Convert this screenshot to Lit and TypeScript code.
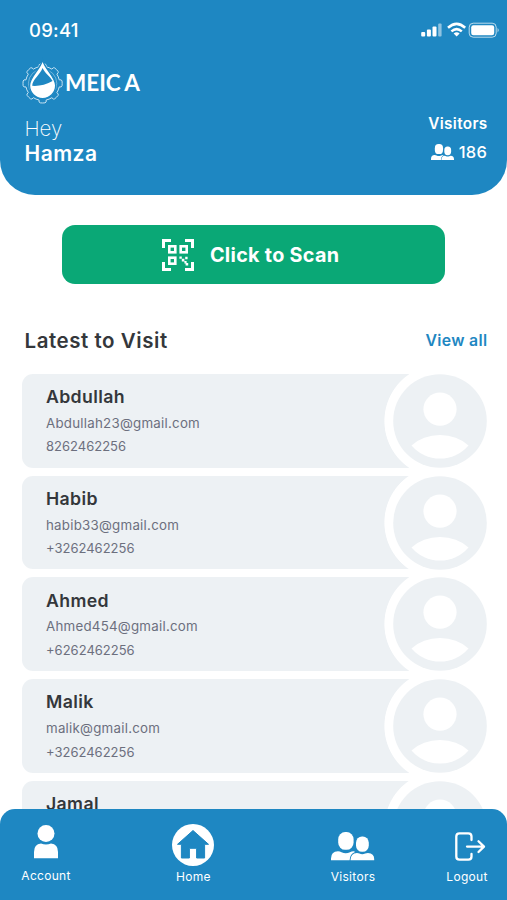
import { LitElement, html, css, svg } from "lit";
import { customElement, property } from "lit/decorators.js";

interface Visitor {
  name: string;
  email: string;
  phone: string;
}

const VISITORS: Visitor[] = [
  { name: "Abdullah", email: "Abdullah23@gmail.com", phone: "8262462256" },
  { name: "Habib", email: "habib33@gmail.com", phone: "+3262462256" },
  { name: "Ahmed", email: "Ahmed454@gmail.com", phone: "+6262462256" },
  { name: "Malik", email: "malik@gmail.com", phone: "+3262462256" },
  { name: "Jamal", email: "", phone: "" },
];

// Outline of the cog behind the drop: eight teeth around the origin.
const cogPath = (): string => {
  const pts: string[] = [];
  const at = (r: number, deg: number) => {
    const a = (deg * Math.PI) / 180;
    return `${(r * Math.cos(a)).toFixed(2)} ${(r * Math.sin(a)).toFixed(2)}`;
  };
  for (let i = 0; i < 8; i++) {
    const c = i * 45;
    pts.push(`${i ? "L" : "M"}${at(17, c - 12)}`);
    pts.push(`Q${at(19.6, c - 12)} ${at(19.6, c - 7)}`);
    pts.push(`A19.6 19.6 0 0 1 ${at(19.6, c + 7)}`);
    pts.push(`Q${at(19.6, c + 12)} ${at(17, c + 12)}`);
    pts.push(`A17 17 0 0 1 ${at(17, c + 33)}`);
  }
  return pts.join("") + "Z";
};

const people = svg`
  <rect x="7.2" y="0" width="15.4" height="17.8" rx="7" ry="7.4"/>
  <rect x="25" y="4.4" width="12.8" height="15.4" rx="6" ry="6.4"/>
  <path d="M0 28.3V26.5Q0 19.6 7 19.3Q9 19.3 10.5 20.2Q14.8 22.3 19 20.2Q20.6 19.3 22.6 19.3Q23.6 19.4 24 20Q18.8 22 18.6 28.3Z"/>
  <path d="M19.5 28.3Q19.5 21.2 26 20.9Q27.4 20.9 28.4 21.5Q31.2 23 34.2 21.5Q35.4 20.9 37 20.9Q43.2 21.2 43.2 27V28.3Z"/>`;

@customElement("visitor-card")
export class VisitorCard extends LitElement {
  @property({ attribute: false }) visitor!: Visitor;

  static styles = css`
    :host {
      display: flex;
      height: 93.6px;
    }
    .body {
      width: 418.5px;
      box-sizing: border-box;
      padding: 11.4px 0 0 24px;
      border-radius: 11px 0 0 11px;
      background: radial-gradient(circle at 100% 50%, #fff 56.2px, #edf1f4 57px);
    }
    .name,
    .line {
      white-space: nowrap;
    }
    .name {
      font-size: 17.7px;
      font-weight: 600;
      line-height: 23px;
      color: #34373b;
      letter-spacing: 0.35px;
    }
    .line {
      font-size: 13px;
      line-height: 23.5px;
      color: #6c6f7e;
    }
    .email {
      margin-top: 3.6px;
      font-size: 13.3px;
      letter-spacing: 0.25px;
    }
    svg {
      width: 94px;
      height: 94px;
      margin-left: -47.5px;
      flex: none;
    }
  `;

  render() {
    const v = this.visitor;
    return html`
      <div class="body">
        <div class="name">${v.name}</div>
        <div class="line email">${v.email}</div>
        <div class="line">${v.phone}</div>
      </div>
      <svg viewBox="0 0 94 94">
        <circle cx="47" cy="47" r="46.8" fill="#edf1f4" />
        <circle cx="47" cy="35.2" r="16.6" fill="#fff" />
        <path d="M18.5 71.5Q30 61 47 61Q64 61 75.5 71.5Q64 84.6 47 84.6Q30 84.6 18.5 71.5Z" fill="#fff" />
      </svg>
    `;
  }
}

@customElement("app-root")
export class AppRoot extends LitElement {
  static styles = css`
    :host {
      display: flex;
      flex-direction: column;
      width: 507px;
      height: 900px;
      overflow: hidden;
      background: #fff;
      font-family: Inter, "Liberation Sans", sans-serif;
    }
    svg {
      display: block;
      flex: none;
      overflow: visible;
    }
    header {
      flex: none;
      height: 194.5px;
      box-sizing: border-box;
      padding: 19px 20px 0 22px;
      border-radius: 0 0 35px 35px;
      background: #1e87c2;
      color: #fff;
    }
    .status {
      display: flex;
      justify-content: space-between;
      height: 22px;
      margin: 0 -13px 0 7px;
    }
    .time {
      font-size: 18.5px;
      font-weight: 500;
      line-height: 22px;
      letter-spacing: 0.25px;
    }
    .brand {
      display: flex;
      align-items: center;
      height: 44px;
      margin-top: 19px;
    }
    .brand-name {
      font-family: Lato, sans-serif;
      font-weight: 700;
      font-size: 22.5px;
      line-height: 28px;
      margin: 1px 0 0 1px;
      white-space: nowrap;
    }
    .brand-end {
      margin-left: 3.5px;
    }
    .greeting {
      display: flex;
      justify-content: space-between;
      padding-left: 2.5px;
      margin-top: 9px;
    }
    .hey,
    .user {
      line-height: 25px;
    }
    .hey {
      font-size: 20.5px;
      font-weight: 200;
      margin-top: 3px;
    }
    .user {
      font-size: 21px;
      font-weight: 600;
      letter-spacing: 0.5px;
    }
    .totals {
      display: flex;
      flex-direction: column;
      align-items: flex-end;
    }
    .label {
      font-size: 15.3px;
      font-weight: 600;
      line-height: 22px;
      letter-spacing: 0.35px;
      margin-right: -0.6px;
    }
    .count {
      display: flex;
      align-items: center;
      gap: 4.5px;
      font-size: 16.5px;
      font-weight: 500;
      line-height: 24px;
      margin-top: 5px;
      letter-spacing: 0.2px;
    }
    .scan {
      flex: none;
      display: flex;
      align-items: center;
      width: 383px;
      height: 59px;
      box-sizing: border-box;
      padding: 0 0 0 100px;
      gap: 15.5px;
      margin: 30.5px 0 0 62.4px;
      border: 0;
      border-radius: 13px;
      background: #0aa876;
      color: #fff;
      font: 700 19.8px/24px Inter, sans-serif;
      letter-spacing: 0.3px;
      white-space: nowrap;
    }
    .heading {
      display: flex;
      align-items: center;
      justify-content: space-between;
      height: 28px;
      flex: none;
      margin: 42px 19.5px 0 24.5px;
    }
    .title {
      font-size: 20.5px;
      font-weight: 600;
      letter-spacing: 0.55px;
      color: #34373b;
    }
    .all {
      font-size: 15.8px;
      font-weight: 600;
      letter-spacing: 0.35px;
      color: #1e87c2;
    }
    .list {
      flex: 1;
      min-height: 0;
      display: flex;
      flex-direction: column;
      gap: 8.1px;
      padding: 20px 0 0 22px;
      margin-bottom: -20px;
      overflow: hidden;
    }
    visitor-card {
      flex: none;
    }
    nav {
      flex: none;
      position: relative;
      display: grid;
      grid-template-columns: 92px 203px 116px 112px;
      height: 91px;
      box-sizing: border-box;
      padding-top: 15px;
      border-radius: 15px 15px 0 0;
      background: #1e87c2;
      color: #fff;
    }
    .tab {
      display: flex;
      flex-direction: column;
      align-items: center;
      font-size: 12px;
      line-height: 16px;
      letter-spacing: 0.3px;
    }
    .glyph {
      display: flex;
      align-items: center;
      height: 44px;
      margin-bottom: 1.4px;
    }
    .tab-account .glyph {
      align-items: flex-start;
      margin-bottom: 0;
    }
    .tab-home .glyph {
      align-items: flex-start;
      margin-right: 1px;
    }
    .tab-logout .glyph {
      margin-left: 6px;
    }
  `;

  render() {
    return html`
      <header>
        <div class="status">
          <div class="time">09:41</div>
          <svg width="80" height="22" viewBox="0 0 80 22" fill="#fff">
            <rect x="1.2" y="13" width="4" height="4.6" rx="1" />
            <rect x="6.9" y="10.4" width="4" height="7.2" rx="1" />
            <rect x="12.5" y="7.6" width="4" height="10" rx="1" />
            <rect x="18.2" y="4.6" width="3.4" height="13" rx="1" opacity=".5" />
            <g fill="none" stroke="#fff" stroke-width="2.5">
              <path d="M28 8.8Q36.6 1 45.2 8.8" />
              <path d="M31.4 12.4Q36.6 7.8 41.8 12.4" />
            </g>
            <path d="M33.6 14.4Q36.6 12.2 39.6 14.4L36.6 17.6Z" />
            <rect x="49.2" y="4.2" width="27" height="14" rx="4" fill="none" stroke="#fff" opacity=".7" />
            <rect x="51.2" y="6.2" width="23" height="10" rx="2.2" />
            <path d="M77.6 9V13.5Q79.6 11.2 77.6 9Z" opacity=".8" />
          </svg>
        </div>
        <div class="brand">
          <svg width="42" height="44" viewBox="0 0 42 44">
            <g transform="translate(20.6 23.4)" fill="none" stroke="#c7e3f3">
              <path d=${cogPath()} />
              <circle r="14.2" stroke-width=".7" opacity=".7" />
            </g>
            <path d="M20.6 0C18 10 7.6 16.5 7.6 25.6A13 13 0 0 0 33.6 25.6C33.6 16.5 23.2 10 20.6 0Z" fill="#fff" stroke="#1e87c2" stroke-width="1.2" />
            <path d="M20.6 8C18.4 14.5 10.4 19.4 10.2 25.8Q20.5 26.6 30.6 21C28.4 16.6 22.6 13 20.6 8Z" fill="#1e87c2" />
          </svg>
          <div class="brand-name">MEIC<span class="brand-end">A</span></div>
        </div>
        <div class="greeting">
          <div>
            <div class="hey">Hey</div>
            <div class="user">Hamza</div>
          </div>
          <div class="totals">
            <div class="label">Visitors</div>
            <div class="count">
              <svg width="23" height="16" viewBox="0 0 43.2 28.3" preserveAspectRatio="none" fill="#fff">${people}</svg>
              186
            </div>
          </div>
        </div>
      </header>

      <button class="scan">
        <svg width="32" height="32" viewBox="0 0 32 32" fill="none" stroke="#fff">
          <path stroke-width="3" d="M1.5 9V1.5H9M23 1.5H30.5V9M30.5 23V30.5H23M9 30.5H1.5V23" />
          <g stroke-width="2.6">
            <rect x="7.3" y="7.3" width="6" height="6" />
            <rect x="18.7" y="7.3" width="6" height="6" />
            <rect x="7.3" y="18.7" width="6" height="6" />
          </g>
          <path fill="#fff" stroke="none" d="M17.4 17.4h2.4v2.4h-2.4zM19.8 19.8h2.6v2.6h-2.6zM23.2 17.8h2.4v2.4h-2.4zM22.4 22h2.2v2h1.6v2.6h-2.6v-2.2h-1.2z" />
        </svg>
        <span>Click to Scan</span>
      </button>

      <div class="heading">
        <div class="title">Latest to Visit</div>
        <div class="all">View all</div>
      </div>

      <div class="list">
        ${VISITORS.map((v) => html`<visitor-card .visitor=${v}></visitor-card>`)}
      </div>

      <nav>
        <div class="tab tab-account">
          <div class="glyph">
            <svg width="24" height="35" viewBox="0 0 24 35" fill="#fff">
              <circle cx="12" cy="9.6" r="8.5" />
              <path d="M0 34.2V28Q0 20.2 7 19.6Q12 21.4 17 19.6Q24 20.2 24 28V34.2Z" />
            </svg>
          </div>
          <div class="caption">Account</div>
        </div>
        <div class="tab tab-home">
          <div class="glyph">
            <svg width="42" height="42" viewBox="0 0 42 42">
              <circle cx="21" cy="21" r="21" fill="#fff" />
              <path d="M21 6.5L36.5 20.3H32.6V34H24.6V24.3H17.4V34H9.4V20.3H5.5Z" fill="#1e87c2" stroke="#1e87c2" stroke-linejoin="round" />
            </svg>
          </div>
          <div class="caption">Home</div>
        </div>
        <div class="tab tab-visitors">
          <div class="glyph">
            <svg width="43.2" height="28.3" viewBox="0 0 43.2 28.3" fill="#fff">${people}</svg>
          </div>
          <div class="caption">Visitors</div>
        </div>
        <div class="tab tab-logout">
          <div class="glyph">
            <svg width="30" height="29" viewBox="0 0 30 29" fill="none" stroke="#fff" stroke-width="2.3" stroke-linecap="round" stroke-linejoin="round">
              <path d="M16.5 8V4.5Q16.5 1.3 13.3 1.3H4.5Q1.3 1.3 1.3 4.5V24.5Q1.3 27.7 4.5 27.7H13.3Q16.5 27.7 16.5 24.5V22" />
              <path d="M12 14.6H29M23.5 9.2L29 14.6L23.5 20" />
            </svg>
          </div>
          <div class="caption">Logout</div>
        </div>
      </nav>
    `;
  }
}
